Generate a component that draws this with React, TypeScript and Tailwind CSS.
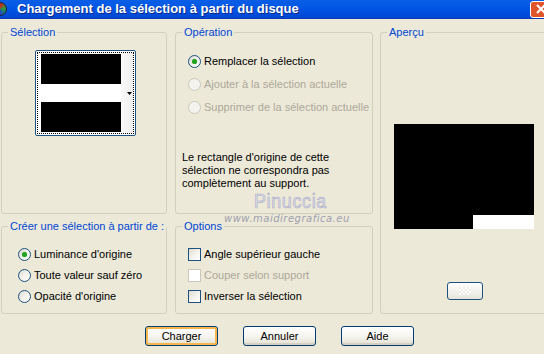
import React from 'react';

const font = { fontFamily: '"Liberation Sans", Arial, sans-serif' };

function Radio({ label, checked, disabled, row = 'h-[21px]' }: { label: string; checked?: boolean; disabled?: boolean; row?: string }) {
  return (
    <div className={'flex items-center ' + row}>
      <span
        className={
          'w-[13px] h-[13px] rounded-full border flex items-center justify-center shrink-0 ' +
          (disabled
            ? 'border-[#cac8bb] bg-[#f4f3ee]'
            : 'border-[#1c5180] bg-gradient-to-br from-[#dcdad0] via-[#f3f2ec] to-white')
        }
      >
        {checked && <span className="w-[5px] h-[5px] rounded-full bg-[#21a121] shadow-[0_0_1px_#6fd66f]" />}
      </span>
      <span className={'ml-[3px] text-[11px] whitespace-nowrap ' + (disabled ? 'text-[#aca899]' : 'text-black')}>{label}</span>
    </div>
  );
}

function Check({ label, disabled }: { label: string; disabled?: boolean }) {
  return (
    <div className="flex items-center h-[21px]">
      <span
        className={
          'w-[13px] h-[13px] border shrink-0 ' +
          (disabled
            ? 'border-[#cac8bb] bg-white'
            : 'border-[#1c5180] bg-gradient-to-br from-[#dcdad0] via-[#f3f2ec] to-white')
        }
      />
      <span className={'ml-[3px] text-[11px] whitespace-nowrap ' + (disabled ? 'text-[#aca899]' : 'text-black')}>{label}</span>
    </div>
  );
}

function Group({ title, className, children }: { title: string; className?: string; children?: React.ReactNode }) {
  return (
    <fieldset className={'border border-[#d0d0bf] rounded-[3px] min-w-0 ' + (className ?? '')}>
      <legend className="ml-[6px] px-[2px] text-[11px] leading-[13px] text-[#0046d5] whitespace-nowrap">{title}</legend>
      {children}
    </fieldset>
  );
}

function Button({ label, primary }: { label: string; primary?: boolean }) {
  return (
    <button
      className={
        'w-[73px] h-[20px] rounded-[3px] border border-[#003c74] text-[11px] text-black bg-gradient-to-b from-white via-[#f6f5f0] to-[#e3e1d4] ' +
        (primary ? 'shadow-[inset_0_0_0_2px_#f8b74a]' : 'shadow-[inset_0_-2px_0_#d6d0c2]')
      }
    >
      {label}
    </button>
  );
}

export default function App() {
  return (
    <div className="w-[544px] h-[354px] bg-[#ece9d8] overflow-hidden relative" style={font}>
      {/* title bar */}
      <div className="h-[19px] flex items-center bg-gradient-to-b from-[#0a5ee6] via-[#0055e5] to-[#0046d1] border-b border-[#0a3cb8]">
        <div className="w-[14px] h-[14px] -ml-[7px] rounded-full bg-[conic-gradient(#d02020,#20a040,#2040d0,#e0c020,#d02020)] border border-[#222] shrink-0" />
        <span className="ml-[10px] text-white font-bold text-[13px] whitespace-nowrap [text-shadow:1px_1px_0_#0a2a8a]">
          Chargement de la sélection à partir du disque
        </span>
        <div className="ml-auto w-[21px] h-[17px] mr-[-7px] rounded-[3px] border border-white bg-[#e0542c] flex items-center justify-center shrink-0">
          <svg width="10" height="10" viewBox="0 0 10 10">
            <path d="M1 1 L9 9 M9 1 L1 9" stroke="white" strokeWidth="2" />
          </svg>
        </div>
      </div>

      <div className="flex pl-[1px] pt-[7px]">
        {/* left column */}
        <div className="flex flex-col w-[166px] shrink-0">
          <Group title="Sélection" className="h-[188px]">
            <div className="ml-[33px] mt-[11px] w-[101px] h-[86px] rounded-[2px] border border-[#1c5180] bg-white p-[1px]">
              <div className="w-full h-full border border-dotted border-black flex">
                <div className="flex flex-col pl-[3px] pt-[1px] w-[83px]">
                  <div className="h-[30px] bg-black" />
                  <div className="h-[18px] bg-white" />
                  <div className="h-[30px] bg-black" />
                </div>
                <div className="flex-1 bg-gradient-to-r from-[#f9f9f9] to-[#eeeeee] flex items-center justify-end pr-[1px]">
                  <svg width="5" height="3" viewBox="0 0 5 3">
                    <path d="M0 0 H5 L2.5 3 Z" fill="black" />
                  </svg>
                </div>
              </div>
            </div>
          </Group>
          <Group title="Créer une sélection à partir de :" className="h-[94px] mt-[6px]">
            <div className="pl-[16px] pt-[11px] flex flex-col">
              <Radio label="Luminance d'origine" checked />
              <Radio label="Toute valeur sauf zéro" />
              <Radio label="Opacité d'origine" />
            </div>
          </Group>
        </div>

        {/* middle column */}
        <div className="flex flex-col w-[198px] ml-[8px] shrink-0">
          <Group title="Opération" className="h-[188px]">
            <div className="pl-[12px] pt-[11px] flex flex-col">
              <Radio label="Remplacer la sélection" checked row="h-[23px]" />
              <Radio label="Ajouter à la sélection actuelle" disabled row="h-[23px]" />
              <Radio label="Supprimer de la sélection actuelle" disabled row="h-[23px]" />
            </div>
            <p className="pl-[6px] mt-[32px] text-[11px] leading-[13px] text-black">
              Le rectangle d'origine de cette
              <br />
              sélection ne correspondra pas
              <br />
              complètement au support.
            </p>
          </Group>
          <Group title="Options" className="h-[94px] mt-[6px]">
            <div className="pl-[12px] pt-[11px] flex flex-col">
              <Check label="Angle supérieur gauche" />
              <Check label="Couper selon support" disabled />
              <Check label="Inverser la sélection" />
            </div>
          </Group>
        </div>

        {/* right column */}
        <div className="w-[180px] ml-[7px] shrink-0">
          <Group title="Aperçu" className="h-[288px]">
            <div className="ml-[13px] mt-[85px] w-[140px] h-[105px] bg-black flex items-end justify-end">
              <div className="w-[61px] h-[14px] bg-white" />
            </div>
            <div className="ml-[66px] mt-[53px] w-[36px] h-[18px] rounded-[3px] border border-[#1c5180] bg-gradient-to-b from-white to-[#e6e4da] flex items-center justify-center">
              <div className="w-[12px] h-[8px] bg-[repeating-conic-gradient(#ffffff_0_25%,#ecebe6_0_50%)] bg-[length:4px_4px]" />
            </div>
          </Group>
        </div>
      </div>

      {/* buttons */}
      <div className="flex gap-[25px] pl-[145px] mt-[12px]">
        <Button label="Charger" primary />
        <Button label="Annuler" />
        <Button label="Aide" />
      </div>

      {/* watermark */}
      <span
        className="absolute left-[254px] top-[190px] text-[21px] leading-[22px] text-[#dedeec] [-webkit-text-stroke:0.6px_#a6a6c2] tracking-[0.8px] scale-x-[0.85] origin-left whitespace-nowrap pointer-events-none"
      >
        Pinuccia
      </span>
      <span
        className="absolute left-[224px] top-[214px] text-[10px] leading-[10px] italic text-[#a0a0ae] tracking-[0.5px] whitespace-nowrap pointer-events-none"
        style={{ fontFamily: '"DejaVu Sans", sans-serif' }}
      >
        www.maidiregrafica.eu
      </span>
    </div>
  );
}
